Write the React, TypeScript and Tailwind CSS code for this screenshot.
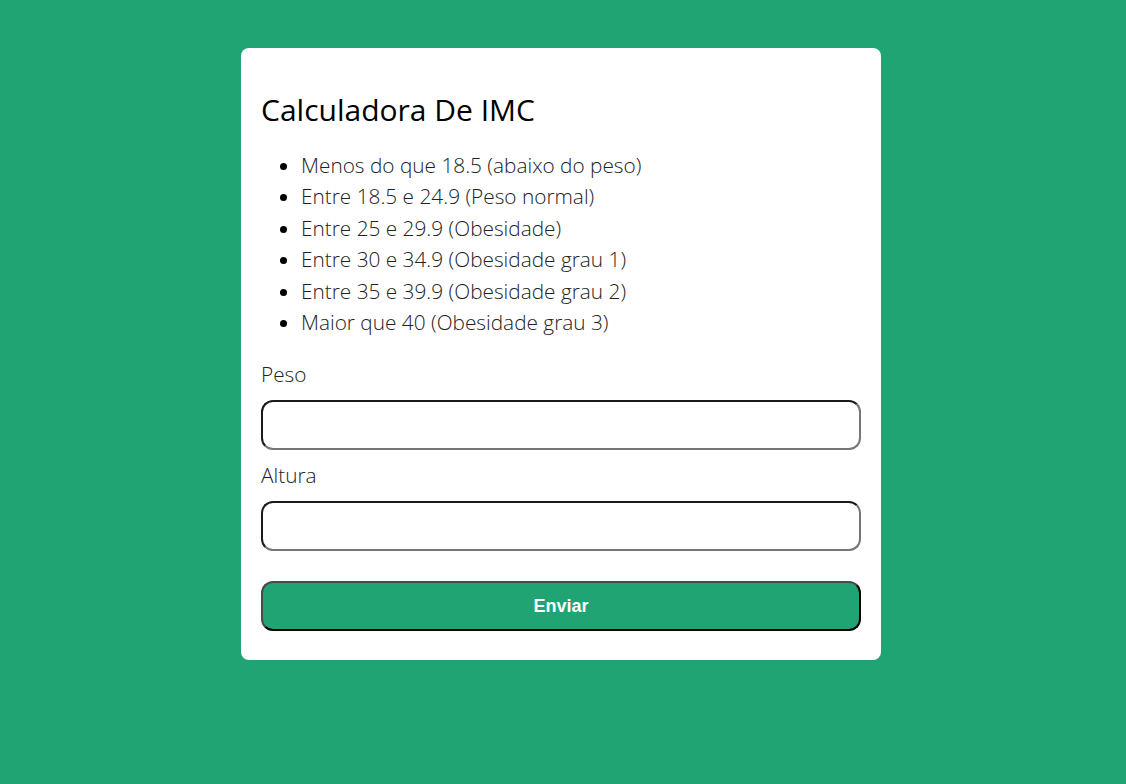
const FAIXAS = [
  "Menos do que 18.5 (abaixo do peso)",
  "Entre 18.5 e 24.9 (Peso normal)",
  "Entre 25 e 29.9 (Obesidade)",
  "Entre 30 e 34.9 (Obesidade grau 1)",
  "Entre 35 e 39.9 (Obesidade grau 2)",
  "Maior que 40 (Obesidade grau 3)",
];

export default function App() {
  return (
    <div className="min-h-[784px] w-full bg-[#21a473] pt-[48px] font-['Open_Sans',sans-serif]">
      <div className="ml-[241px] w-[640px] rounded-[8px] bg-white px-[20px] pt-[41px] pb-[29px]">
        <h1 className="text-[30px] leading-[41px] font-normal text-black">Calculadora De IMC</h1>
        <ul className="mt-[20px] list-disc pl-[40px] text-[20.8px] leading-[31.4px] font-light text-[#222] marker:text-black">
          {FAIXAS.map((f) => (
            <li key={f}>{f}</li>
          ))}
        </ul>
        <form className="mt-[23px] flex flex-col" onSubmit={(e) => e.preventDefault()}>
          <label className="text-[20.8px] leading-[27px] font-light text-[#222]">Peso</label>
          <input
            type="text"
            className="mt-[12px] h-[50px] w-full rounded-[12px] border-2 border-t-[#1a1a1a] border-l-[#1a1a1a] border-r-[#767676] border-b-[#767676] bg-white px-3 outline-none"
          />
          <label className="mt-[12px] text-[20.8px] leading-[27px] font-light text-[#222]">Altura</label>
          <input
            type="text"
            className="mt-[12px] h-[50px] w-full rounded-[12px] border-2 border-t-[#1a1a1a] border-l-[#1a1a1a] border-r-[#767676] border-b-[#767676] bg-white px-3 outline-none"
          />
          <button
            type="submit"
            className="mt-[30px] h-[50px] w-full rounded-[12px] border-2 border-t-[#4a4a4a] border-l-[#4a4a4a] border-r-black border-b-black bg-[#21a473] font-['Liberation_Sans',Arial,sans-serif] text-[18px] font-bold text-white"
          >
            Enviar
          </button>
        </form>
      </div>
    </div>
  );
}
